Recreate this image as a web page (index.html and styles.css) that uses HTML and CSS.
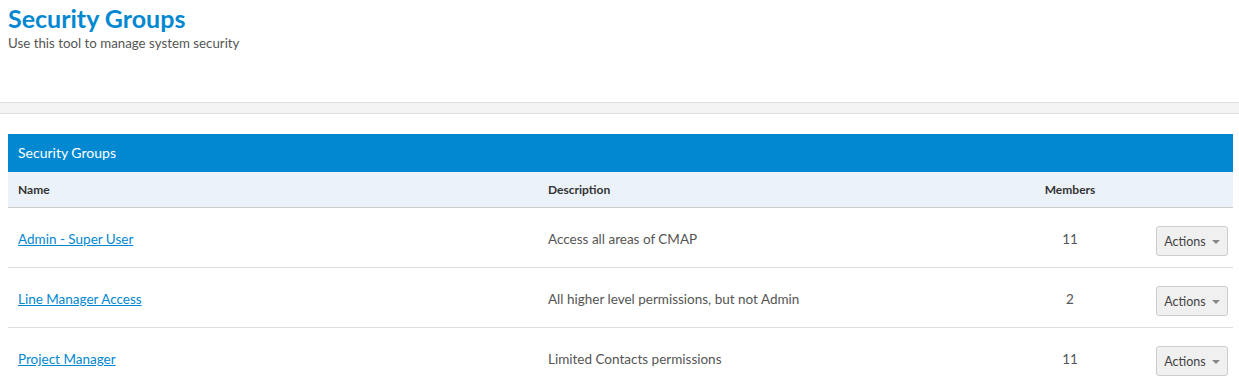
FILE: index.html
```html
<!DOCTYPE html>
<html lang="en">
<head>
<meta charset="UTF-8">
<meta name="viewport" content="width=device-width, initial-scale=1.0">
<title>Security Groups</title>
<link rel="stylesheet" href="styles.css">
</head>
<body>
<div class="page-head">
    <h1 class="page-title">Security Groups</h1>
    <p class="page-sub">Use this tool to manage system security</p>
</div>
<div class="toolbar"></div>

<div class="panel">
    <div class="panel-heading">Security Groups</div>
    <table class="groups">
        <thead>
            <tr>
                <th class="col-name">Name</th>
                <th class="col-desc">Description</th>
                <th class="col-members">Members</th>
                <th class="col-actions"></th>
            </tr>
        </thead>
        <tbody>
            <tr>
                <td><a href="#">Admin - Super User</a></td>
                <td>Access all areas of CMAP</td>
                <td class="col-members">11</td>
                <td class="col-actions"><button class="btn-actions">Actions <span class="caret"></span></button></td>
            </tr>
            <tr>
                <td><a href="#">Line Manager Access</a></td>
                <td>All higher level permissions, but not Admin</td>
                <td class="col-members">2</td>
                <td class="col-actions"><button class="btn-actions">Actions <span class="caret"></span></button></td>
            </tr>
            <tr>
                <td><a href="#">Project Manager</a></td>
                <td>Limited Contacts permissions</td>
                <td class="col-members">11</td>
                <td class="col-actions"><button class="btn-actions">Actions <span class="caret"></span></button></td>
            </tr>
        </tbody>
    </table>
</div>
</body>
</html>
```

FILE: styles.css
```css
body {
    margin: 0;
    font-family: Lato, "Liberation Sans", sans-serif;
    color: #555;
    background: #fff;
}
.page-head {
    padding: 3px 8px 0 8px;
    height: 99px;
}
.page-title {
    margin: 0;
    font-size: 25px;
    font-weight: 700;
    color: #0288d1;
    line-height: 30px;
}
.page-sub {
    margin: 2px 0 0 0;
    font-size: 13.3px;
    line-height: 16px;
    color: #555;
}
.toolbar {
    height: 10px;
    background: #f4f4f4;
    border-top: 1px solid #e0e0e0;
    border-bottom: 1px solid #e0e0e0;
}
.panel {
    margin: 20px 6px 0 8px;
}
.panel-heading {
    background: #0288d1;
    color: #fff;
    font-size: 14px;
    height: 38px;
    line-height: 38px;
    padding: 0 10px;
}
.groups {
    width: 100%;
    border-collapse: collapse;
    table-layout: fixed;
    font-size: 13.5px;
}
.groups th {
    background: #ebf2f9;
    color: #333;
    font-size: 12px;
    font-weight: 700;
    text-align: left;
    height: 35px;
    padding: 0 10px;
    border-bottom: 1px solid #ccc;
}
.groups td {
    height: 56px;
    padding: 3px 10px 0 10px;
    border-bottom: 1px solid #ddd;
    color: #555;
}
.groups a {
    color: #0288d1;
}
.col-name {
    width: 510px;
}
.col-desc {
    width: 442px;
}
.groups .col-members {
    text-align: center;
    width: 120px;
}
.groups .col-actions {
    text-align: right;
    padding-right: 5px;
}
.btn-actions {
    font-family: Lato, "Liberation Sans", sans-serif;
    font-size: 12.5px;
    line-height: 28px;
    color: #444;
    background: #f0f0f0;
    border: 1px solid #ccc;
    border-radius: 3px;
    height: 30px;
    width: 72px;
    margin-top: 3px;
    padding: 1px 5px 0 5px;
    cursor: pointer;
}
.caret {
    display: inline-block;
    width: 0;
    height: 0;
    margin-left: 3px;
    vertical-align: middle;
    border-left: 4px solid transparent;
    border-right: 4px solid transparent;
    border-top: 4px solid #888;
}
```
